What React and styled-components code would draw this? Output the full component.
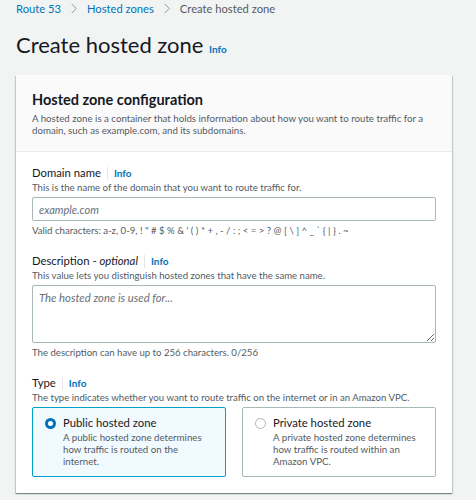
import styled, { createGlobalStyle } from "styled-components";
import { useState } from "react";

const GlobalStyle = createGlobalStyle`
  body {
    margin: 0;
    background: #f2f3f3;
    font-family: Lato, "Open Sans", sans-serif;
    color: #16191f;
  }
`;

export default function App() {
  const [type, setType] = useState("public");
  const [domain, setDomain] = useState("");
  const [description, setDescription] = useState("");

  return (
    <Page>
      <GlobalStyle />
      <Breadcrumbs>
        <Crumb>Route 53</Crumb>
        <Chevron />
        <Crumb>Hosted zones</Crumb>
        <Chevron />
        <Current>Create hosted zone</Current>
      </Breadcrumbs>
      <Title>
        Create hosted zone <InfoLink>Info</InfoLink>
      </Title>
      <Card>
        <CardHeader>
          <h2>Hosted zone configuration</h2>
          <p>
            A hosted zone is a container that holds information about how you
            want to route traffic for a domain, such as example.com, and its
            subdomains.
          </p>
        </CardHeader>
        <CardBody>
          <Field>
            <Label>
              Domain name <Divider /> <InfoLink>Info</InfoLink>
            </Label>
            <Hint>This is the name of the domain that you want to route traffic for.</Hint>
            <Input
              placeholder="example.com"
              value={domain}
              onChange={(e) => setDomain(e.target.value)}
            />
            <Hint>
              Valid characters: a-z, 0-9, ! " # $ % &amp; ' ( ) * + , - / : ; &lt; = &gt; ? @ [ \ ] ^ _ ` {"{"} | {"}"} . ~
            </Hint>
          </Field>
          <Field>
            <Label>
              <span>
                Description - <em>optional</em>
              </span>
              <Divider /> <InfoLink>Info</InfoLink>
            </Label>
            <Hint>This value lets you distinguish hosted zones that have the same name.</Hint>
            <TextArea
              placeholder="The hosted zone is used for..."
              value={description}
              onChange={(e) => setDescription(e.target.value)}
            />
            <Hint>The description can have up to 256 characters. {description.length}/256</Hint>
          </Field>
          <Field>
            <Label>
              Type <Divider /> <InfoLink>Info</InfoLink>
            </Label>
            <Hint>
              The type indicates whether you want to route traffic on the internet or in an Amazon VPC.
            </Hint>
            <Tiles>
              <Tile $active={type === "public"} onClick={() => setType("public")}>
                <Radio $checked={type === "public"} />
                <div>
                  <TileTitle>Public hosted zone</TileTitle>
                  <TileText>
                    A public hosted zone determines how traffic is routed on the internet.
                  </TileText>
                </div>
              </Tile>
              <Tile $active={type === "private"} onClick={() => setType("private")}>
                <Radio $checked={type === "private"} />
                <div>
                  <TileTitle>Private hosted zone</TileTitle>
                  <TileText>
                    A private hosted zone determines how traffic is routed within an Amazon VPC.
                  </TileText>
                </div>
              </Tile>
            </Tiles>
          </Field>
        </CardBody>
      </Card>
    </Page>
  );
}

function Chevron() {
  return (
    <ChevronIcon viewBox="0 0 8 14" width="6" height="11">
      <path d="M1 1l6 6-6 6" fill="none" stroke="#879596" strokeWidth="1.3" />
    </ChevronIcon>
  );
}

const Page = styled.div`
  padding: 0 24px 0 16px;
  min-height: 500px;
  box-sizing: border-box;
`;

const Breadcrumbs = styled.nav`
  display: flex;
  align-items: center;
  gap: 10px;
  height: 16px;
  font-size: 11.2px;
`;

const Crumb = styled.a`
  color: #0073bb;
  cursor: pointer;
`;

const Current = styled.span`
  color: #545b64;
`;

const ChevronIcon = styled.svg`
  flex: none;
`;

const Title = styled.h1`
  margin: 15px 0 0;
  height: 44px;
  font-size: 22px;
  font-weight: 400;
  line-height: 28px;
`;

const InfoLink = styled.a`
  color: #0073bb;
  font-size: 10px;
  font-weight: 700;
  cursor: pointer;
`;

const Card = styled.section`
  background: #fff;
  box-shadow: 0 1px 1px 0 rgba(0, 28, 36, 0.3), 1px 1px 1px 0 rgba(0, 28, 36, 0.15),
    -1px 1px 1px 0 rgba(0, 28, 36, 0.15);
`;

const CardHeader = styled.header`
  background: #fafafa;
  border-bottom: 1px solid #eaeded;
  padding: 16px 16px 15px;
  h2 {
    margin: 0 0 3px;
    font-size: 14.5px;
    font-weight: 700;
    line-height: 18px;
  }
  p {
    margin: 0;
    font-size: 9.7px;
    line-height: 12px;
    color: #545b64;
  }
`;

const CardBody = styled.div`
  padding: 13px 16px 16px;
  display: flex;
  flex-direction: column;
  gap: 15px;
`;

const Field = styled.div`
  display: flex;
  flex-direction: column;
`;

const Label = styled.div`
  display: flex;
  align-items: center;
  gap: 6px;
  font-size: 11.3px;
  line-height: 16px;
  em {
    font-style: italic;
  }
`;

const Divider = styled.span`
  width: 1px;
  height: 13px;
  background: #e3e7e8;
`;

const Hint = styled.div`
  font-size: 9.6px;
  line-height: 14px;
  color: #545b64;
`;

const Input = styled.input`
  margin: 2px 0 3px;
  height: 24px;
  box-sizing: border-box;
  border: 1px solid #aab7b8;
  border-radius: 2px;
  padding: 0 6px;
  font: italic 11px Lato, "Open Sans", sans-serif;
  &::placeholder {
    color: #687078;
  }
`;

const TextArea = styled.textarea`
  margin: 2px 0 3px;
  height: 58px;
  box-sizing: border-box;
  border: 1px solid #aab7b8;
  border-radius: 2px;
  padding: 5px 6px;
  resize: vertical;
  font: italic 11.3px Lato, "Open Sans", sans-serif;
  &::placeholder {
    color: #687078;
  }
`;

const Tiles = styled.div`
  display: grid;
  grid-template-columns: 1fr 1fr;
  gap: 16px;
  margin-top: 2px;
`;

const Tile = styled.label`
  display: flex;
  gap: 7px;
  height: 70px;
  box-sizing: border-box;
  padding: 7px 12px;
  border: 1px solid ${(p) => (p.$active ? "#00a1c9" : "#aab7b8")};
  background: ${(p) => (p.$active ? "#f1faff" : "#fff")};
  border-radius: 2px;
  cursor: pointer;
`;

const Radio = styled.span`
  flex: none;
  width: 11px;
  height: 11px;
  margin-top: 3px;
  border-radius: 50%;
  box-sizing: border-box;
  border: ${(p) => (p.$checked ? "3.5px solid #0073bb" : "1px solid #aab7b8")};
  background: #fff;
`;

const TileTitle = styled.div`
  font-size: 11.3px;
  line-height: 16px;
`;

const TileText = styled.div`
  font-size: 9.7px;
  line-height: 12px;
  color: #545b64;
`;
